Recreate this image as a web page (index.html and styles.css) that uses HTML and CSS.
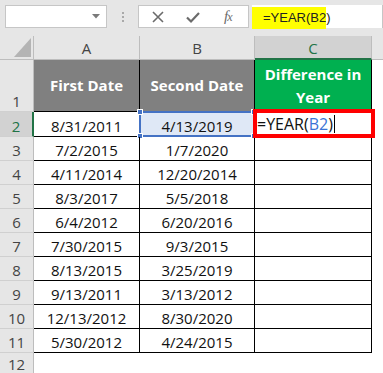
FILE: index.html
```html
<!DOCTYPE html>
<html>
<head>
<meta charset="utf-8">
<link rel="stylesheet" href="styles.css">
</head>
<body>
<div class="fbar">
  <div class="namebox">
    <svg class="dd" width="8" height="5" viewBox="0 0 8 5"><polygon points="0,0 8,0 4,4.5" fill="#7a7a7a"/></svg>
  </div>
  <div class="dots"><span></span><span></span><span></span></div>
  <div class="btns">
    <svg class="ic" width="14" height="14" viewBox="0 0 14 14"><path d="M2 2 L12 12 M12 2 L2 12" stroke="#6b6b6b" stroke-width="1.6" fill="none"/></svg>
    <svg class="ic" width="16" height="14" viewBox="0 0 16 14"><path d="M2 7.5 L6 11.5 L14 3" stroke="#6b6b6b" stroke-width="2.2" fill="none"/></svg>
    <span class="fx">f<i>x</i></span>
  </div>
  <div class="finput"><span class="hl">=YEAR(B2)</span></div>
</div>
<div class="sheet">
  <div class="corner"><svg width="18" height="19" viewBox="0 0 18 19"><polygon points="17,0 17,19 0,19" fill="#b4b4b4"/></svg></div>
  <div class="ch">A</div>
  <div class="ch">B</div>
  <div class="ch sel">C</div>
  <div class="ch last"></div>

  <div class="rh">1</div>
  <div class="c hd">First Date</div>
  <div class="c hd">Second Date</div>
  <div class="c hd green">Difference in<br>Year</div>
  <div class="e"></div>

  <div class="rh sel">2</div>
  <div class="c">8/31/2011</div>
  <div class="c b2">4/13/2019<div class="range"><i class="h tl"></i><i class="h bl"></i><i class="h tr"></i><i class="h br"></i></div></div>
  <div class="c c2">=YEAR(<span class="ref">B2</span>)<span class="caret"></span><div class="redbox"></div></div>
  <div class="e"></div>

  <div class="rh">3</div><div class="c">7/2/2015</div><div class="c">1/7/2020</div><div class="c"></div><div class="e"></div>
  <div class="rh">4</div><div class="c">4/11/2014</div><div class="c">12/20/2014</div><div class="c"></div><div class="e"></div>
  <div class="rh">5</div><div class="c">8/3/2017</div><div class="c">5/5/2018</div><div class="c"></div><div class="e"></div>
  <div class="rh">6</div><div class="c">6/4/2012</div><div class="c">6/20/2016</div><div class="c"></div><div class="e"></div>
  <div class="rh">7</div><div class="c">7/30/2015</div><div class="c">9/3/2015</div><div class="c"></div><div class="e"></div>
  <div class="rh">8</div><div class="c">8/13/2015</div><div class="c">3/25/2019</div><div class="c"></div><div class="e"></div>
  <div class="rh">9</div><div class="c">9/13/2011</div><div class="c">3/13/2012</div><div class="c"></div><div class="e"></div>
  <div class="rh">10</div><div class="c">12/13/2012</div><div class="c">8/30/2020</div><div class="c"></div><div class="e"></div>
  <div class="rh">11</div><div class="c">5/30/2012</div><div class="c">4/24/2015</div><div class="c"></div><div class="e"></div>
  <div class="rh r12">12</div><div class="e"></div><div class="e"></div><div class="e"></div><div class="e"></div>
</div>
</body>
</html>
```
FILE: styles.css
```css
* { box-sizing: border-box; }
html, body { margin: 0; padding: 0; }
body {
  width: 383px;
  height: 373px;
  overflow: hidden;
  background: #fff;
  font-family: "Open Sans", "Liberation Sans", sans-serif;
}
.fbar {
  height: 36px;
  background: #e6e6e6;
  display: flex;
  align-items: flex-start;
  padding: 5px 0 0 5px;
}
.namebox {
  width: 102px;
  height: 23px;
  background: #fff;
  border: 1px solid #c6c6c6;
  position: relative;
  display: flex;
  justify-content: flex-end;
  align-items: center;
  padding-right: 6px;
}
.dots {
  width: 31px;
  height: 23px;
  display: flex;
  flex-direction: column;
  align-items: center;
  justify-content: center;
  gap: 2px;
}
.dots span { width: 2px; height: 2px; background: #a9a9a9; }
.btns {
  width: 111px;
  height: 23px;
  background: #fff;
  border: 1px solid #c6c6c6;
  display: flex;
  align-items: center;
  padding-left: 12px;
}
.btns .ic:first-child { margin-right: 20px; }
.btns .ic:nth-child(2) { margin-right: 23px; }
.fx {
  font-family: "Liberation Serif", serif;
  font-style: italic;
  font-size: 15px;
  color: #6b6b6b;
  letter-spacing: -1px;
}
.fx i { font-size: 12px; }
.finput {
  margin-left: 3px;
  width: 131px;
  height: 23px;
  background: #fff;
  border-right: 1px solid #c6c6c6;
}
.hl {
  display: inline-block;
  height: 22px;
  width: 74px;
  background: #ffff00;
  font-family: "Liberation Sans", sans-serif;
  font-size: 13px;
  line-height: 22px;
  padding-left: 11px;
  color: #222;
}
.sheet {
  display: grid;
  grid-template-columns: 34px 106px 115px 117px 11px;
  grid-template-rows: 24px 52px 25px repeat(9, 24px) 21px;
}
.corner, .ch, .rh {
  background: #e6e6e6;
  color: #444;
}
.corner {
  border-right: 1px solid #bdbdbd;
  border-bottom: 1px solid #bdbdbd;
  display: flex;
  align-items: flex-end;
  justify-content: flex-end;
  padding: 0 1px 2px 0;
}
.ch {
  border-right: 1px solid #bdbdbd;
  border-bottom: 1px solid #bdbdbd;
  display: flex;
  align-items: center;
  justify-content: center;
  font-size: 15px;
  padding-top: 1px;
}
.ch.last { border-right: 0; }
.ch.sel {
  background: #d2d2d2;
  color: #217346;
  border-bottom: 2px solid #217346;
}
.rh {
  border-right: 1px solid #bdbdbd;
  border-bottom: 1px solid #d0d0d0;
  display: flex;
  align-items: flex-end;
  justify-content: center;
  font-size: 15px;
  line-height: 20px;
}
.rh.r12 { align-items: flex-start; padding-top: 4px; line-height: 15px; border-bottom: 0; }
.rh.sel {
  background: #d2d2d2;
  color: #217346;
  border-right: 2px solid #217346;
}
.c {
  border-right: 1px solid #000;
  border-bottom: 1px solid #000;
  display: flex;
  align-items: flex-end;
  justify-content: center;
  font-size: 15px;
  line-height: 20px;
  color: #111;
  position: relative;
  white-space: nowrap;
}
.c.hd {
  background: #808080;
  color: #fff;
  font-weight: bold;
  align-items: center;
  text-align: center;
  line-height: 23px;
  font-size: 15px;
}
.c.hd.green { background: #00b050; }
.b2 { background: #dfe8f6; }
.range {
  position: absolute;
  left: -1px;
  top: -1px;
  right: -1px;
  bottom: -1px;
  border: 2px solid #4472c4;
}
.h {
  position: absolute;
  width: 6px;
  height: 6px;
  background: #4472c4;
  border: 1px solid #fff;
}
.h.tl { left: -4px; top: -4px; }
.h.bl { left: -4px; bottom: -4px; }
.h.tr { right: -4px; top: -4px; }
.h.br { right: -4px; bottom: -4px; }
.c2 {
  justify-content: flex-start;
  align-items: center;
  padding-left: 2px;
  font-size: 16px;
  z-index: 2;
}
.ref { color: #3b74d6; }
.caret {
  display: inline-block;
  width: 1px;
  height: 18px;
  background: #000;
  margin-left: 1px;
}
.redbox {
  position: absolute;
  left: -2px;
  top: -3px;
  right: -4px;
  bottom: -2px;
  border: 4px solid #ff0000;
}
.e { background: #fff; }
```
